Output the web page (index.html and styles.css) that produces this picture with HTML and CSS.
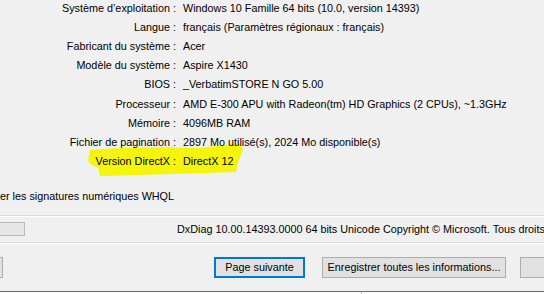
FILE: index.html
```html
<!DOCTYPE html>
<html lang="fr">
<head>
    <meta charset="UTF-8">
    <meta name="viewport" content="width=device-width, initial-scale=1.0">
    <title>Outil de diagnostic DirectX</title>
    <link rel="stylesheet" href="styles.css">
</head>
<body>
    <div class="window">
        <div class="info">
            <span class="label">Système d’exploitation</span><span class="colon">:</span><span class="value">Windows 10 Famille 64 bits (10.0, version 14393)</span>
            <span class="label">Langue</span><span class="colon">:</span><span class="value">français (Paramètres régionaux : français)</span>
            <span class="label">Fabricant du système</span><span class="colon">:</span><span class="value">Acer</span>
            <span class="label">Modèle du système</span><span class="colon">:</span><span class="value">Aspire X1430</span>
            <span class="label">BIOS</span><span class="colon">:</span><span class="value">_VerbatimSTORE N GO 5.00</span>
            <span class="label">Processeur</span><span class="colon">:</span><span class="value">AMD E-300 APU with Radeon(tm) HD Graphics (2 CPUs), ~1.3GHz</span>
            <span class="label">Mémoire</span><span class="colon">:</span><span class="value">4096MB RAM</span>
            <span class="label">Fichier de pagination</span><span class="colon">:</span><span class="value">2897 Mo utilisé(s), 2024 Mo disponible(s)</span>
            <span class="label">Version DirectX</span><span class="colon">:</span><span class="value">DirectX 12</span>
            <svg class="highlight" width="160" height="34" viewBox="84 144 160 34">
                <path d="M90 150 Q140 146 200 148 L240 143 L243 150 Q238 160 236 172 Q180 174 100 176 L98 167 Q90 166 88 160 Z" fill="#f4f40c"/>
            </svg>
        </div>

        <div class="whql">er les signatures numériques WHQL</div>

        <div class="status">
            <div class="progress"></div>
            <div class="version">DxDiag 10.00.14393.0000 64 bits Unicode Copyright © Microsoft. Tous droits</div>
        </div>

        <div class="buttons">
            <button class="btn btn-cut" type="button" aria-label="Aide"></button>
            <button class="btn btn-default" type="button">Page suivante</button>
            <button class="btn btn-save" type="button">Enregistrer toutes les informations...</button>
            <button class="btn btn-exit" type="button" aria-label="Quitter"></button>
        </div>
    </div>

    <div class="taskbar">
        <span class="tick"></span>
    </div>
</body>
</html>
```

FILE: styles.css
```css
* {
    margin: 0;
    padding: 0;
    box-sizing: border-box;
}

html, body {
    width: 544px;
    height: 294px;
    overflow: hidden;
}

body {
    background-color: #f0f0f0;
    font-family: "Liberation Sans", Arial, sans-serif;
    font-size: 10.8px;
    color: #000;
}

.window {
    height: 291px;
    overflow: hidden;
}

.info {
    position: relative;
    display: grid;
    grid-template-columns: 170px 13px 1fr;
    grid-auto-rows: 19.2px;
    align-items: center;
    margin-top: -2px;
    white-space: nowrap;
}

.info span {
    position: relative;
    z-index: 1;
}

.label {
    text-align: right;
}

.colon {
    padding-left: 3px;
}

.highlight {
    position: absolute;
    left: 84px;
    top: 146px;
    z-index: 0;
}

.whql {
    margin-top: 16px;
    height: 19px;
    line-height: 19px;
    white-space: nowrap;
}

.status {
    display: flex;
    align-items: center;
    height: 28px;
    margin-top: 9px;
    border-top: 1px solid #dadada;
    border-bottom: 1px solid #dadada;
    box-shadow: 0 1px 0 #fff, inset 0 1px 0 #fff;
    white-space: nowrap;
}

.progress {
    flex-shrink: 0;
    width: 32px;
    height: 14px;
    margin-left: -7px;
    background-color: #e6e6e6;
    border: 1px solid #bcbcbc;
}

.version {
    flex-shrink: 0;
    margin-left: 152px;
}

.buttons {
    display: flex;
    align-items: center;
    height: 49px;
    white-space: nowrap;
}

.btn {
    flex-shrink: 0;
    height: 21px;
    font-family: inherit;
    font-size: 10.8px;
    color: #000;
    background-color: #e1e1e1;
    border: 1px solid #adadad;
    padding: 0 4px;
}

.btn-cut {
    width: 70px;
    margin-left: -67px;
}

.btn-default {
    width: 91px;
    margin-left: 211px;
    border: 2px solid #0078d7;
}

.btn-save {
    width: 184px;
    margin-left: 17px;
}

.btn-exit {
    width: 80px;
    margin-left: 14px;
}

.taskbar {
    height: 3px;
    background-color: #fbfbfb;
    border-top: 1px solid #1f7fcf;
    position: relative;
}

.tick {
    position: absolute;
    left: 361px;
    top: 0;
    width: 1px;
    height: 3px;
    background-color: #c8c8c8;
}
```
